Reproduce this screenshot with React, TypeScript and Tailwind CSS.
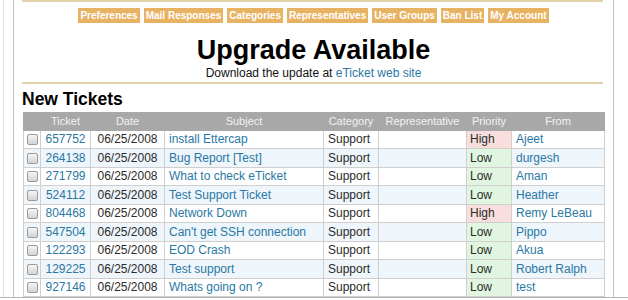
import React from "react";

type Row = {
  id: string;
  subject: string;
  priority: "High" | "Low";
  from: string;
};

const rows: Row[] = [
  { id: "657752", subject: "install Ettercap", priority: "High", from: "Ajeet" },
  { id: "264138", subject: "Bug Report [Test]", priority: "Low", from: "durgesh" },
  { id: "271799", subject: "What to check eTicket", priority: "Low", from: "Aman" },
  { id: "524112", subject: "Test Support Ticket", priority: "Low", from: "Heather" },
  { id: "804468", subject: "Network Down", priority: "High", from: "Remy LeBeau" },
  { id: "547504", subject: "Can't get SSH connection", priority: "Low", from: "Pippo" },
  { id: "122293", subject: "EOD Crash", priority: "Low", from: "Akua" },
  { id: "129225", subject: "Test support", priority: "Low", from: "Robert Ralph" },
  { id: "927146", subject: "Whats going on ?", priority: "Low", from: "test" },
];

const nav = [
  "Preferences",
  "Mail Responses",
  "Categories",
  "Representatives",
  "User Groups",
  "Ban List",
  "My Account",
];

function Checkbox() {
  return (
    <span className="inline-block w-[11px] h-[11px] rounded-[2px] border border-[#9a9a9a] bg-gradient-to-b from-[#f6f6f6] to-[#d4d4d4] align-middle" />
  );
}

export default function App() {
  return (
    <div className="w-[628px] h-[300px] overflow-hidden bg-white font-['Liberation_Sans',Arial,sans-serif]">
      <div className="h-[298px] border-b border-[#b4b4b4] pl-[3px]">
        <div className="h-full border-l border-[#e4e4e4] pl-[9px]">
          <div className="h-full w-[601px] border-l border-r border-[#c4c4c4] px-[8px]">
            <div className="h-[2px] mr-[2px] bg-[#e2d2aa]" />
            <div className="flex justify-center gap-[4px] mt-[6px]">
              {nav.map((n) => (
                <span
                  key={n}
                  className="h-[15px] px-[2px] bg-[#e8b263] text-white text-[10px] font-bold leading-[15px] whitespace-nowrap"
                >
                  {n}
                </span>
              ))}
            </div>
            <h1 className="mt-[14px] text-center text-[27px] leading-[27px] font-bold text-black">
              Upgrade Available
            </h1>
            <p className="mt-[2px] text-center text-[12px] leading-[14px] text-[#111]">
              Download the update at{" "}
              <span className="text-[#2a78a4]">eTicket web site</span>
            </p>
            <div className="mt-[2px] h-[2px] mr-[2px] bg-[#e2d2aa]" />
            <h2 className="mt-[6px] text-[17.5px] leading-[18px] font-bold text-black">
              New Tickets
            </h2>
            <table className="mt-[4px] ml-[1px] w-[581px] table-fixed border-collapse text-[12px] text-[#2b2b2b]">
              <colgroup>
                <col className="w-[17px]" />
                <col className="w-[50px]" />
                <col className="w-[74px]" />
                <col className="w-[159px]" />
                <col className="w-[55px]" />
                <col className="w-[88px]" />
                <col className="w-[45px]" />
                <col className="w-[93px]" />
              </colgroup>
              <thead>
                <tr className="h-[17px] bg-[#a8a8a8] text-[11px] text-[#f2f2f2]">
                  <th className="font-normal border border-[#a8a8a8]"></th>
                  <th className="font-normal border border-[#a8a8a8]">Ticket</th>
                  <th className="font-normal border border-[#a8a8a8]">Date</th>
                  <th className="font-normal border border-[#a8a8a8]">Subject</th>
                  <th className="font-normal border border-[#a8a8a8]">Category</th>
                  <th className="font-normal border border-[#a8a8a8] whitespace-nowrap">Representative</th>
                  <th className="font-normal border border-[#a8a8a8]">Priority</th>
                  <th className="font-normal border border-[#a8a8a8]">From</th>
                </tr>
              </thead>
              <tbody>
                {rows.map((r, i) => (
                  <tr
                    key={r.id}
                    className={`h-[18.5px] ${i % 2 === 1 ? "bg-[#eef5fb]" : "bg-white"}`}
                  >
                    <td className="border border-[#cfcfcf] text-center leading-none p-0">
                      <Checkbox />
                    </td>
                    <td className="border border-[#cfcfcf] text-center text-[#2a78a4] leading-[16px] p-0">{r.id}</td>
                    <td className="border border-[#cfcfcf] text-center leading-[16px] p-0">06/25/2008</td>
                    <td className="border border-[#cfcfcf] pl-[4px] text-[#2a78a4] whitespace-nowrap leading-[16px] py-0">{r.subject}</td>
                    <td className="border border-[#cfcfcf] pl-[4px] leading-[16px] py-0">Support</td>
                    <td className="border border-[#cfcfcf] p-0"></td>
                    <td
                      className={`border border-[#cfcfcf] pl-[3px] leading-[16px] py-0 ${
                        r.priority === "High" ? "bg-[#f9dede]" : "bg-[#e0f6e0]"
                      }`}
                    >
                      {r.priority}
                    </td>
                    <td className="border border-[#cfcfcf] pl-[4px] text-[#2a78a4] whitespace-nowrap leading-[16px] py-0">{r.from}</td>
                  </tr>
                ))}
              </tbody>
            </table>
          </div>
        </div>
      </div>
    </div>
  );
}
